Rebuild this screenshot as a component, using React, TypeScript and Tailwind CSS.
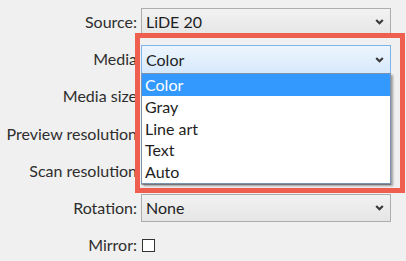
const rows = [
  { label: "Source:", value: "LiDE 20" },
  { label: "Media", value: "Color", focused: true },
  { label: "Media size", value: "" },
  { label: "Preview resolution", value: "" },
  { label: "Scan resolution", value: "" },
  { label: "Rotation:", value: "None" },
];

const options = ["Color", "Gray", "Line art", "Text", "Auto"];

function Chevron() {
  return (
    <svg width="9" height="6" viewBox="0 0 9 6" className="shrink-0">
      <path d="M1.2 1 L4.5 4.3 L7.8 1" fill="none" stroke="#3a3a3a" strokeWidth="2.2" />
    </svg>
  );
}

function Combo({ value, focused }: { value: string; focused?: boolean }) {
  return (
    <div
      className={
        focused
          ? "flex h-[29px] w-[250px] items-center justify-between border border-[#7eb4ea] bg-gradient-to-b from-[#edf5fd] to-[#d6e9fc] pl-[4px] pr-[6px]"
          : "flex h-[28px] w-[250px] items-center justify-between border border-[#adadad] bg-gradient-to-b from-[#f2f2f2] to-[#e5e5e5] pl-[4px] pr-[6px]"
      }
    >
      <span className="text-[16px] text-[#1e1e1e]">{value}</span>
      <Chevron />
    </div>
  );
}

export default function App() {
  return (
    <div
      className="relative h-[261px] w-[406px] overflow-hidden bg-[#f0f0f0]"
      style={{ fontFamily: "'Segoe UI', Lato, 'Noto Sans', sans-serif" }}
    >
      <div className="flex flex-col pt-[8px]">
        {rows.map((r) => (
          <div key={r.label} className="flex h-[37.2px] items-start gap-[4px]">
            <div className="flex h-[28px] w-[137px] items-center justify-end whitespace-nowrap text-[16px] text-[#2e2e2e]">
              {r.label}
            </div>
            <Combo value={r.value} focused={r.focused} />
          </div>
        ))}
        <div className="flex h-[28px] items-center gap-[4px]">
          <div className="w-[137px] text-right text-[16px] text-[#2e2e2e]">Mirror:</div>
          <div className="ml-[1px] h-[13px] w-[13px] border border-[#333333] bg-white" />
        </div>
      </div>

      {/* open dropdown list */}
      <div className="absolute left-[141px] top-[73px] flex h-[111px] w-[250px] flex-col border border-[#7a93b0] bg-white shadow-[2px_2px_2px_rgba(0,0,0,0.35)]">
        {options.map((o, i) => (
          <div
            key={o}
            className={
              i === 0
                ? "flex h-[21.8px] items-center bg-[#3399ff] pl-[3px] text-[16px] text-white"
                : "flex h-[21.8px] items-center pl-[3px] text-[16px] text-[#1e1e1e]"
            }
          >
            {o}
          </div>
        ))}
      </div>

      {/* annotation frame */}
      <div className="pointer-events-none absolute left-[135px] top-[33px] h-[160px] w-[270px] border-[5px] border-[#ee5f4f]" />
    </div>
  );
}
